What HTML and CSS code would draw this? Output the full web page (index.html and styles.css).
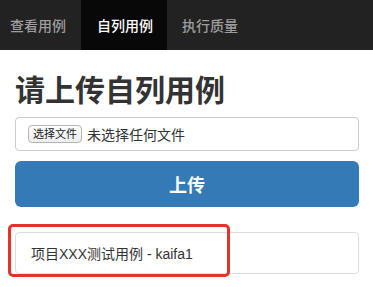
FILE: index.html
```html
<!DOCTYPE html>
<html lang="zh-CN">
<head>
    <meta charset="UTF-8">
    <meta name="viewport" content="width=device-width, initial-scale=1.0">
    <title>自列用例</title>
    <link rel="stylesheet" href="styles.css">
</head>
<body>
    <nav class="navbar">
        <a class="nav-link first">查看用例</a>
        <a class="nav-link active">自列用例</a>
        <a class="nav-link">执行质量</a>
    </nav>

    <div class="main">
        <h1 class="title">请上传自列用例</h1>

        <div class="file-box">
            <span class="file-btn">选择文件</span>
            <span class="file-name">未选择任何文件</span>
        </div>

        <button type="button" class="upload-btn">上传</button>

        <div class="case-item">
            项目XXX测试用例 - kaifa1
            <div class="mark"></div>
        </div>
    </div>
</body>
</html>
```

FILE: styles.css
```css
body {
    margin: 0;
    padding: 0;
    font-family: "Liberation Sans", "Noto Sans CJK SC", sans-serif;
    font-size: 14px;
    color: #333;
    background-color: #fff;
}

.navbar {
    display: flex;
    height: 50px;
    background-color: #222;
}

.nav-link {
    display: flex;
    align-items: center;
    padding: 0 15px;
    color: #9d9d9d;
    font-size: 14px;
    font-weight: 500;
    text-decoration: none;
}

.nav-link.first {
    padding-left: 10px;
}

.nav-link.active {
    background-color: #080808;
    color: #fff;
    padding-left: 16px;
    padding-right: 14px;
}

.main {
    padding: 0 14px 20px 15px;
}

.title {
    margin: 24px 0 10px;
    font-size: 30px;
    line-height: 33px;
    font-weight: bold;
    color: #333;
}

.file-box {
    display: flex;
    align-items: center;
    height: 34px;
    box-sizing: border-box;
    padding: 0 12px;
    border: 1px solid #ccc;
    border-radius: 4px;
}

.file-btn {
    display: inline-block;
    font-size: 11px;
    line-height: 14px;
    padding: 1px 4px;
    border: 1px solid #b5b5b5;
    border-radius: 4px;
    background: linear-gradient(#fff, #ececec);
    color: #222;
    margin-right: 5px;
}

.file-name {
    font-size: 14px;
    color: #333;
}

.upload-btn {
    display: block;
    width: 100%;
    height: 46px;
    margin-top: 10px;
    border: none;
    border-radius: 6px;
    background-color: #337ab7;
    color: #fff;
    font-family: "Liberation Sans", "Noto Sans CJK SC", sans-serif;
    font-size: 18px;
    font-weight: bold;
}

.case-item {
    position: relative;
    margin-top: 25px;
    height: 42px;
    box-sizing: border-box;
    padding: 0 15px;
    display: flex;
    align-items: center;
    border: 1px solid #ddd;
    border-radius: 4px;
}

.mark {
    position: absolute;
    left: -8px;
    top: -9px;
    width: 222px;
    height: 53px;
    box-sizing: border-box;
    border: 3px solid #e5332c;
    border-radius: 5px;
}
```
